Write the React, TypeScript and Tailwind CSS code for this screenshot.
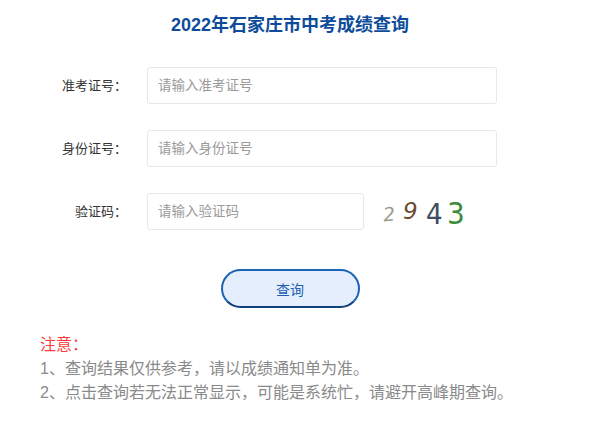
import React from 'react';

const font = { fontFamily: '"Liberation Sans", "Noto Sans CJK SC", sans-serif' };

const Row = ({ label, placeholder, narrow, children }: { label: string; placeholder: string; narrow?: boolean; children?: React.ReactNode }) => {
  return (
    <div className="flex items-center">
      <div className="w-[127px] text-right text-[13px] text-[#333]">{label}</div>
      <input
        className={`ml-5 h-[37px] rounded-[3px] border border-[#e8e8e8] bg-white px-[10px] text-[13.5px] text-[#333] outline-none placeholder:text-[#9a9a9a] ${narrow ? 'w-[217px]' : 'w-[350px]'}`}
        placeholder={placeholder}
        style={font}
      />
      {children}
    </div>
  );
};

const App = () => {
  return (
    <div className="w-[603px] h-[423px] bg-white" style={font}>
      <div className="w-[580px]">
        {/* Title */}
        <h1 className="pt-[14px] text-center text-[18px] leading-[22px] font-bold text-[#0e4c9b]">2022年石家庄市中考成绩查询</h1>

        {/* Form */}
        <div className="mt-[31px] flex flex-col gap-[26px]">
          <Row label="准考证号：" placeholder="请输入准考证号" />
          <Row label="身份证号：" placeholder="请输入身份证号" />
          <Row label="验证码：" placeholder="请输入验证码" narrow>
            <div className="ml-[19px] flex items-end gap-[3px] select-none" style={{ fontFamily: '"DejaVu Sans", sans-serif' }}>
              <span className="text-[19px] italic text-[#9a9d88] -rotate-6 mr-[5px]">2</span>
              <span className="text-[23px] italic text-[#6b4a32]">9</span>
              <span className="text-[29px] text-[#3d4d60] leading-none ml-[4px] scale-x-90">4</span>
              <span className="text-[31px] text-[#3c8c3a] leading-none scale-x-90">3</span>
            </div>
          </Row>
        </div>

        {/* Button */}
        <div className="mt-[39px] flex justify-center">
          <button className="h-[39px] w-[139px] rounded-full border-2 border-[#1c62b5] border-b-[#123f7a] bg-[#e4eefd] pt-[3px] text-[14px] text-[#1f5fb0]">查询</button>
        </div>

        {/* Notes */}
        <div className="mt-[25px] pl-10 text-[16px] leading-[24px]">
          <p className="text-[#ff3b3b]">注意：</p>
          <p className="text-[#8a8a8a]">1、查询结果仅供参考，请以成绩通知单为准。</p>
          <p className="text-[#8a8a8a]">2、点击查询若无法正常显示，可能是系统忙，请避开高峰期查询。</p>
        </div>
      </div>
    </div>
  );
};

export default App;
